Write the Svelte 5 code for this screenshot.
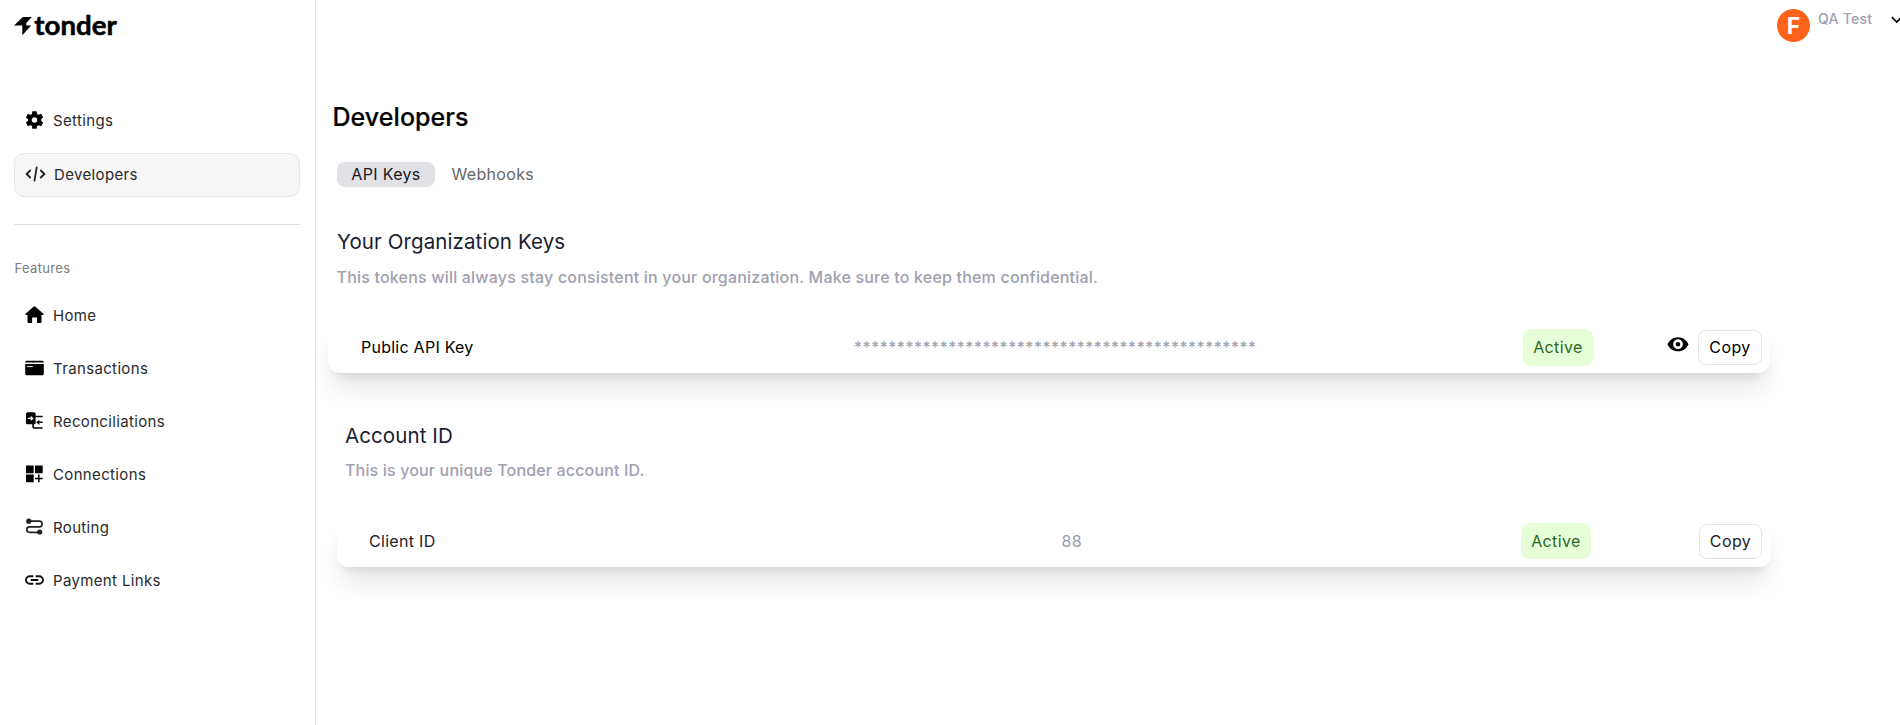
<script>
  const general = [
    { id: 'gear', label: 'Settings', active: false },
    { id: 'code', label: 'Developers', active: true }
  ];
  const features = [
    { id: 'home', label: 'Home' },
    { id: 'card', label: 'Transactions' },
    { id: 'recon', label: 'Reconciliations' },
    { id: 'grid', label: 'Connections' },
    { id: 'route', label: 'Routing' },
    { id: 'link', label: 'Payment Links' }
  ];
  const masked = '*'.repeat(47);
</script>

{#snippet icon(id)}
  <svg class="icon" width={id === 'code' ? 22 : 20} height="20" viewBox={id === 'code' ? '0 0 22 20' : '-0.5 0 20 20'} fill="none">
    {#if id === 'gear'}
      <g transform="translate(-1 -1) scale(.917)">
        <path fill="#000" d="M19.14 12.94c.04-.3.06-.61.06-.94 0-.32-.02-.64-.07-.94l2.03-1.58c.18-.14.23-.41.12-.61l-1.92-3.32c-.12-.22-.37-.29-.59-.22l-2.39.96c-.5-.38-1.03-.7-1.62-.94l-.36-2.54c-.04-.24-.24-.41-.48-.41h-3.84c-.24 0-.43.17-.47.41l-.36 2.54c-.59.24-1.13.57-1.62.94l-2.39-.96c-.22-.08-.47 0-.59.22L2.740 8.870c-.12.21-.08.47.12.61l2.03 1.58c-.05.3-.09.63-.09.94s.02.64.07.94l-2.03 1.58c-.18.14-.23.41-.12.61l1.92 3.32c.12.22.37.29.59.22l2.39-.96c.5.38 1.03.7 1.62.94l.36 2.54c.05.24.24.41.48.41h3.84c.24 0 .44-.17.47-.41l.36-2.54c.59-.24 1.13-.56 1.62-.94l2.39.96c.22.08.47 0 .59-.22l1.92-3.32c.12-.22.07-.47-.12-.61zM12 15a3 3 0 1 1 0-6 3 3 0 0 1 0 6z" />
      </g>
    {:else if id === 'code'}
      <path stroke="#222" stroke-width="1.8" stroke-linecap="round" stroke-linejoin="round" d="M5.200 6.500 1.600 10l3.600 3.500M15.800 6.500l3.600 3.500-3.600 3.500M11.700 3.400 9.500 16.700" />
    {:else if id === 'home'}
      <path fill="#000" d="M9.300 1.600a1 1 0 0 1 1.400 0l8.200 7.200c.5.5.3 1.100-.4 1.100H17v7.200c0 .6-.4 1-1 1h-2.900c-.4 0-.6-.2-.6-.6v-5.100H7.600v5.100c0 .4-.2.6-.6.6H4c-.6 0-1-.4-1-1V9.900H1.500c-.7 0-.9-.6-.4-1.100z" />
    {:else if id === 'card'}
      <path fill="#000" d="M2.200 2.700h15.600c.8 0 1.500.6 1.500 1.500v.3H.7v-.3c0-.9.7-1.500 1.500-1.500zM.7 6h18.600v9.700c0 .9-.6 1.500-1.500 1.500H2.200c-.9 0-1.500-.6-1.500-1.500z" />
      <path fill="#fff" d="M2.700 8.100h5.600v1H2.700z" />
    {:else if id === 'recon'}
      <path fill="#000" d="M3.200 1.300h6.200c1 0 1.700.7 1.700 1.700v8.700c0 .9-.6 1.600-1.600 1.600H3.200c-1 0-1.700-.7-1.700-1.600V3c0-1 .7-1.700 1.700-1.700z" />
      <path stroke="#fff" stroke-width="1.300" d="M3.300 7.400h4.500" />
      <path fill="#fff" d="m6.200 4.800 2.900 2.600-2.900 2.600z" />
      <path stroke="#000" stroke-width="1.600" stroke-linecap="round" stroke-linejoin="round" d="M11 5.500h6.500M8.600 13v3c0 .6.4 1 1 1h7.900M13 11.300h4.500" />
      <path fill="#000" d="m14.800 8.700-3 2.600 3 2.600z" />
    {:else if id === 'grid'}
      <path fill="#000" d="M1.500 1.500h7.700v7.700H1.500zM10.500 1.500h7.700v7.700h-7.700zM1.500 10.500h7.700v7.700H1.500z" />
      <path stroke="#000" stroke-width="1.500" d="M14.300 10.600v7.600M10.500 14.400h7.700" />
    {:else if id === 'route'}
      <path stroke="#222" stroke-width="1.700" stroke-linecap="round" d="M4.500 4.200h10.300a2.800 2.800 0 0 1 0 5.700H5a2.700 2.700 0 0 0 0 5.400h10" />
      <circle cx="4.300" cy="4.200" r="2.600" fill="#222" />
      <circle cx="15.200" cy="15" r="2.600" fill="#222" />
    {:else}
      <path stroke="#111" stroke-width="1.900" d="M8.800 6.200H5.300a3.800 3.800 0 0 0 0 7.600h3.500M11.200 6.200h3.500a3.800 3.800 0 0 1 0 7.600h-3.500M6.200 10h7.600" />
    {/if}
  </svg>
{/snippet}

<div class="page">
  <aside>
    <svg class="logo" width="110" height="36" viewBox="0 -5 110 36">
      <path d="M0 15.600 8.900 7H17.800L12.300 12.900V15.600H17.200L8.300 25.300V15.600z" />
      <text x="20.300" y="24.700" textLength="82.500" lengthAdjust="spacingAndGlyphs">tonder</text>
    </svg>

    <nav class="general">
      {#each general as item}
        <a class="item" class:active={item.active}>{@render icon(item.id)}<span>{item.label}</span></a>
      {/each}
    </nav>
    <hr />
    <p class="group">Features</p>
    <nav>
      {#each features as item}
        <a class="item">{@render icon(item.id)}<span>{item.label}</span></a>
      {/each}
    </nav>
  </aside>

  <div class="content">
    <header>
      <div class="avatar">F</div>
      <span class="user">QA Test</span>
      <svg class="chevron" width="12" height="8" viewBox="0 0 12 8" fill="none">
        <path stroke="#000" stroke-width="1.700" d="m.8 1 5 5 5-5" />
      </svg>
    </header>

    <main>
      <h1>Developers</h1>
      <div class="tabs">
        <button class="tab selected">API Keys</button>
        <button class="tab">Webhooks</button>
      </div>

      <section>
        <h2>Your Organization Keys</h2>
        <p class="note">This tokens will always stay consistent in your organization. Make sure to keep them confidential.</p>
        <div class="key-card org">
          <span class="name">Public API Key</span>
          <span class="value masked">{masked}</span>
          <span class="badge">Active</span>
          <svg class="eye" width="22" height="15" viewBox="0 0 22 15">
            <path fill="#000" fill-rule="evenodd" d="M11 .2C6.300.2 2.400 3 .5 7.200c1.900 4.300 5.800 7.100 10.500 7.100s8.600-2.800 10.500-7.100C19.600 3 15.700.2 11 .2zm0 11.900a4.900 4.900 0 1 1 0-9.800 4.900 4.900 0 0 1 0 9.800zm0-7.200a2.300 2.300 0 1 0 0 4.600 2.300 2.300 0 0 0 0-4.600z" />
          </svg>
          <button class="copy">Copy</button>
        </div>
      </section>

      <section class="account">
        <h2>Account ID</h2>
        <p class="note">This is your unique Tonder account ID.</p>
        <div class="key-card client">
          <span class="name">Client ID</span>
          <span class="value">88</span>
          <span class="badge">Active</span>
          <button class="copy">Copy</button>
        </div>
      </section>
    </main>
  </div>
</div>

<style>
  :global(body) { background: #fff; overflow: hidden; }
  .page {
    display: flex;
    width: 1900px;
    height: 725px;
    overflow: hidden;
    font-family: Inter, sans-serif;
    font-size: 16px;
    letter-spacing: 0.4px;
    color: #000;
  }
  h1, h2, p { margin: 0; }
  button { font: inherit; letter-spacing: inherit; color: inherit; background: none; border: 0; padding: 0; }

  aside {
    box-sizing: border-box;
    width: 316px;
    flex: none;
    padding: 5px 15px 0 14px;
    border-right: 1px solid #e2e2e4;
    background: #fff;
  }
  .logo { display: block; }
  .logo text {
    font: 700 27px Lato, sans-serif;
    letter-spacing: 0;
    stroke: #000;
    stroke-width: 0.5px;
  }
  .general { margin-top: 57px; }
  .item {
    box-sizing: border-box;
    display: flex;
    align-items: center;
    height: 44px;
    padding-left: 10px;
    margin-bottom: 9px;
    border-radius: 10px;
    font-size: 15px;
    letter-spacing: 0.35px;
    color: #2a2a2d;
  }
  .item span { margin-left: 9px; }
  .item.active { margin-top: 11px; padding-bottom: 2px; border: 1px solid #e7e7e9; background: #f6f6f6; }
  .item.active span { margin-left: 7px; }
  .icon { flex: none; }
  hr { margin: 27px 0 0; border: 0; border-top: 1px solid #dfdfe1; }
  .group {
    margin: 33px 0 15px 0.5px;
    height: 20px;
    line-height: 20px;
    font-size: 13px;
    letter-spacing: 0.325px;
    color: #7b7b7b;
  }

  .content { flex: 1; min-width: 0; }
  header { display: flex; height: 84px; padding: 9px 0 0 1461px; box-sizing: border-box; }
  .avatar {
    flex: none;
    width: 33px;
    height: 33px;
    border-radius: 50%;
    background: #ff6319;
    color: #fff;
    font-weight: 700;
    font-size: 23px;
    line-height: 34px;
    text-align: center;
    letter-spacing: 0;
  }
  .user {
    flex: none;
    width: 73px;
    margin-left: 8px;
    font-size: 14px;
    font-weight: 500;
    line-height: 20px;
    letter-spacing: 0.25px;
    color: #a0a0ae;
  }
  .chevron { flex: none; margin: 7px 0 0 0; }

  main { padding: 16px 0 0 12px; }
  h1 {
    margin-left: 4.5px;
    font-size: 25px;
    font-weight: 500;
    line-height: 34px;
    letter-spacing: 0.05px;
    -webkit-text-stroke: 0.2px #000;
  }
  .tabs { display: flex; margin: 28px 0 0 9px; gap: 16.5px; }
  .tab { height: 25px; line-height: 25px; border-radius: 8px; letter-spacing: 0.33px; color: #666; }
  .tab.selected { width: 98px; background: #e1e1e6; color: #18181b; }
  h2 {
    margin-left: 9px;
    font-size: 20.5px;
    font-weight: 400;
    line-height: 30px;
    letter-spacing: 0.1px;
    color: #1a1d30;
  }
  section { padding-top: 40px; }
  .note {
    margin: 8px 0 0 8.5px;
    font-weight: 500;
    line-height: 24px;
    letter-spacing: 0.193px;
    color: #a0a0ae;
  }
  .key-card {
    display: grid;
    align-items: center;
    box-sizing: border-box;
    height: 51px;
    margin-top: 33px;
    border-radius: 12px;
    background: #fff;
    box-shadow: 0 20px 25px -5px rgb(0 0 0 / 0.1), 0 8px 10px -6px rgb(0 0 0 / 0.1);
  }
  .org { width: 1442px; padding-left: 33px; grid-template-columns: 493px 669px 145px 30px 64px; letter-spacing: 0.25px; }
  .client { width: 1434px; margin-left: 9px; padding-left: 32px; grid-template-columns: 692.5px 459.5px 178px 63px; color: #22222c; letter-spacing: 0.3px; }
  .name, .value { padding-bottom: 2px; }
  .value { color: #9c9cab; }
  .masked { letter-spacing: 0.55px; }
  .badge {
    width: 70px;
    height: 37px;
    line-height: 36px;
    border-radius: 8px;
    background: #e6ffd9;
    color: #2e6426;
    text-align: center;
    letter-spacing: 0.4px;
  }
  .client .badge { height: 36px; line-height: 37px; margin-bottom: 1px; }
  .eye { align-self: start; margin: 15px 0 0 -1px; }
  .copy {
    box-sizing: border-box;
    height: 35px;
    padding-bottom: 2px;
    border: 1px solid #e4e4e9;
    border-radius: 8px;
    letter-spacing: 0.4px;
  }
  .account { padding-top: 48px; }
  .account h2 { margin-left: 17px; }
  .account .note { margin: 7px 0 0 17px; letter-spacing: 0.16px; }
  .client { margin-top: 34px; }
</style>
